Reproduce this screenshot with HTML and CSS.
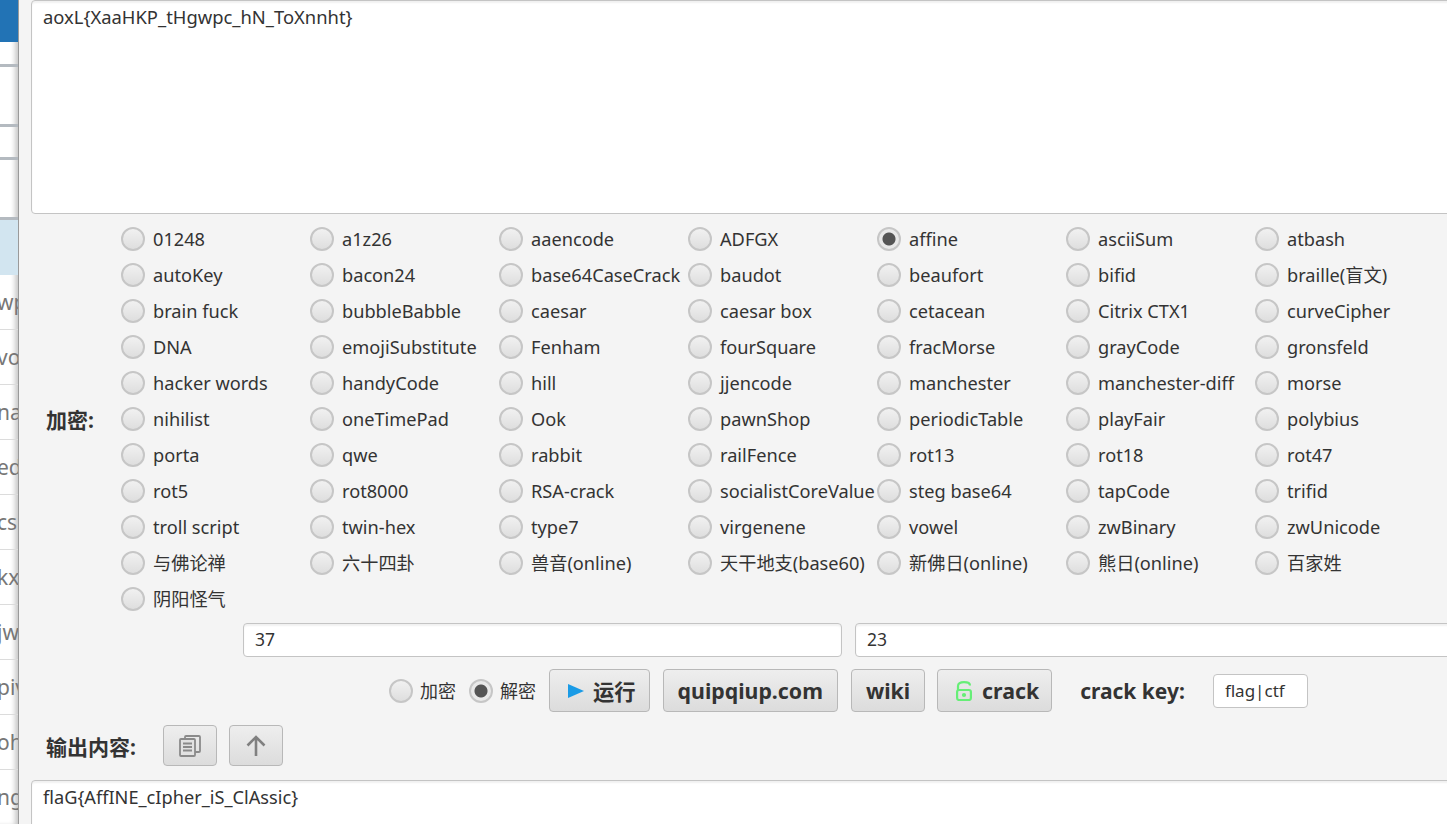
FILE: index.html
```html
<!DOCTYPE html>
<html lang="en">

<head>
    <meta charset="UTF-8">
    <title>CTF tools</title>
    <link rel="stylesheet" href="styles.css">
</head>

<body>
    <div class="back-window">
        <div class="back-head"></div>
        <div class="back-row thick row-a"></div>
        <div class="back-row thick row-b"></div>
        <div class="back-row thick row-c"></div>
        <div class="back-row thick row-b"></div>
        <div class="back-row selected"></div>
        <div class="back-row">wp</div>
        <div class="back-row">vo</div>
        <div class="back-row">na</div>
        <div class="back-row">edi</div>
        <div class="back-row">cs</div>
        <div class="back-row">kx</div>
        <div class="back-row">jw</div>
        <div class="back-row">piv</div>
        <div class="back-row">ohu</div>
        <div class="back-row">ng</div>
    </div>

    <div class="main">
        <textarea class="text-box input-text" spellcheck="false">aoxL{XaaHKP_tHgwpc_hN_ToXnnht}</textarea>

        <div class="cipher-row">
            <div class="bold-label cipher-label">加密:</div>
            <div class="cipher-grid">
                <label class="opt"><span class="radio"></span>01248</label>
                <label class="opt"><span class="radio"></span>a1z26</label>
                <label class="opt"><span class="radio"></span>aaencode</label>
                <label class="opt"><span class="radio"></span>ADFGX</label>
                <label class="opt"><span class="radio on"></span>affine</label>
                <label class="opt"><span class="radio"></span>asciiSum</label>
                <label class="opt"><span class="radio"></span>atbash</label>

                <label class="opt"><span class="radio"></span>autoKey</label>
                <label class="opt"><span class="radio"></span>bacon24</label>
                <label class="opt"><span class="radio"></span>base64CaseCrack</label>
                <label class="opt"><span class="radio"></span>baudot</label>
                <label class="opt"><span class="radio"></span>beaufort</label>
                <label class="opt"><span class="radio"></span>bifid</label>
                <label class="opt"><span class="radio"></span>braille(盲文)</label>

                <label class="opt"><span class="radio"></span>brain fuck</label>
                <label class="opt"><span class="radio"></span>bubbleBabble</label>
                <label class="opt"><span class="radio"></span>caesar</label>
                <label class="opt"><span class="radio"></span>caesar box</label>
                <label class="opt"><span class="radio"></span>cetacean</label>
                <label class="opt"><span class="radio"></span>Citrix CTX1</label>
                <label class="opt"><span class="radio"></span>curveCipher</label>

                <label class="opt"><span class="radio"></span>DNA</label>
                <label class="opt"><span class="radio"></span>emojiSubstitute</label>
                <label class="opt"><span class="radio"></span>Fenham</label>
                <label class="opt"><span class="radio"></span>fourSquare</label>
                <label class="opt"><span class="radio"></span>fracMorse</label>
                <label class="opt"><span class="radio"></span>grayCode</label>
                <label class="opt"><span class="radio"></span>gronsfeld</label>

                <label class="opt"><span class="radio"></span>hacker words</label>
                <label class="opt"><span class="radio"></span>handyCode</label>
                <label class="opt"><span class="radio"></span>hill</label>
                <label class="opt"><span class="radio"></span>jjencode</label>
                <label class="opt"><span class="radio"></span>manchester</label>
                <label class="opt"><span class="radio"></span>manchester-diff</label>
                <label class="opt"><span class="radio"></span>morse</label>

                <label class="opt"><span class="radio"></span>nihilist</label>
                <label class="opt"><span class="radio"></span>oneTimePad</label>
                <label class="opt"><span class="radio"></span>Ook</label>
                <label class="opt"><span class="radio"></span>pawnShop</label>
                <label class="opt"><span class="radio"></span>periodicTable</label>
                <label class="opt"><span class="radio"></span>playFair</label>
                <label class="opt"><span class="radio"></span>polybius</label>

                <label class="opt"><span class="radio"></span>porta</label>
                <label class="opt"><span class="radio"></span>qwe</label>
                <label class="opt"><span class="radio"></span>rabbit</label>
                <label class="opt"><span class="radio"></span>railFence</label>
                <label class="opt"><span class="radio"></span>rot13</label>
                <label class="opt"><span class="radio"></span>rot18</label>
                <label class="opt"><span class="radio"></span>rot47</label>

                <label class="opt"><span class="radio"></span>rot5</label>
                <label class="opt"><span class="radio"></span>rot8000</label>
                <label class="opt"><span class="radio"></span>RSA-crack</label>
                <label class="opt"><span class="radio"></span>socialistCoreValue</label>
                <label class="opt"><span class="radio"></span>steg base64</label>
                <label class="opt"><span class="radio"></span>tapCode</label>
                <label class="opt"><span class="radio"></span>trifid</label>

                <label class="opt"><span class="radio"></span>troll script</label>
                <label class="opt"><span class="radio"></span>twin-hex</label>
                <label class="opt"><span class="radio"></span>type7</label>
                <label class="opt"><span class="radio"></span>virgenene</label>
                <label class="opt"><span class="radio"></span>vowel</label>
                <label class="opt"><span class="radio"></span>zwBinary</label>
                <label class="opt"><span class="radio"></span>zwUnicode</label>

                <label class="opt"><span class="radio"></span>与佛论禅</label>
                <label class="opt"><span class="radio"></span>六十四卦</label>
                <label class="opt"><span class="radio"></span>兽音(online)</label>
                <label class="opt"><span class="radio"></span>天干地支(base60)</label>
                <label class="opt"><span class="radio"></span>新佛日(online)</label>
                <label class="opt"><span class="radio"></span>熊日(online)</label>
                <label class="opt"><span class="radio"></span>百家姓</label>

                <label class="opt"><span class="radio"></span>阴阳怪气</label>
            </div>
        </div>

        <div class="key-row">
            <input class="key-input" type="text" value="37">
            <input class="key-input" type="text" value="23">
        </div>

        <div class="action-row">
            <label class="opt small"><span class="radio"></span>加密</label>
            <label class="opt small"><span class="radio on"></span>解密</label>
            <button class="btn run-btn">
                <svg width="16" height="16" viewBox="0 0 16 16"><path d="M0 1L16 8L0 15Z" fill="#1a9be6"/></svg>
                运行
            </button>
            <button class="btn">quipqiup.com</button>
            <button class="btn">wiki</button>
            <button class="btn crack-btn">
                <svg width="16" height="20" viewBox="0 0 16 20" fill="none" stroke="#66ee77" stroke-width="2.2">
                    <path d="M2 9V5C2 2.500 4 1.200 8 1.200S14 2.500 14 4.500"/>
                    <rect x="1.100" y="9" width="13.800" height="10" rx="2"/>
                    <circle cx="8" cy="14" r="1"/>
                </svg>
                crack
            </button>
            <span class="bold-label crack-label">crack key:</span>
            <input class="crack-input" type="text" value="flag|ctf">
        </div>

        <div class="output-row">
            <div class="bold-label output-label">输出内容:</div>
            <button class="icon-btn">
                <svg width="22" height="22" viewBox="0 0 22 22" fill="none" stroke="#8a8a8a" stroke-width="1.800">
                    <rect x="6" y="1" width="15" height="16" rx="1"/>
                    <rect x="1" y="4" width="15" height="17" rx="1" fill="#e2e2e2"/>
                    <path d="M4 8.500H13M4 12H13M4 15.500H13"/>
                </svg>
            </button>
            <button class="icon-btn">
                <svg width="20" height="21" viewBox="0 0 20 21" fill="none" stroke="#808080" stroke-width="2.600">
                    <path d="M10 21V2M1.500 10.500L10 2L18.500 10.500"/>
                </svg>
            </button>
        </div>

        <textarea class="text-box output-text" spellcheck="false">flaG{AffINE_cIpher_iS_ClAssic}</textarea>
    </div>
</body>

</html>
```

FILE: styles.css
```css
html, body {
    height: 100%;
}

body {
    margin: 0;
    display: flex;
    overflow: hidden;
    font-family: "Noto Sans", "Noto Sans CJK SC", sans-serif;
    font-size: 18.2px;
    color: #333;
    background-color: #f4f4f4;
}

/* window behind, only a strip shows */
.back-window {
    width: 19px;
    flex-shrink: 0;
    overflow: hidden;
    background-color: #fff;
    box-shadow: inset -5px 0 5px -2px rgba(0, 0, 0, 0.22);
    border-right: 1px solid #9a9a9a;
    box-sizing: border-box;
}

.back-head {
    height: 42px;
    background-color: #2273b5;
}

.back-row {
    height: 55px;
    box-sizing: border-box;
    border-bottom: 1px solid #dcdcdc;
    font-size: 21px;
    line-height: 54px;
    text-indent: -3px;
    color: #777;
    white-space: nowrap;
    overflow: hidden;
}

.back-row.thick {
    border-bottom: 3px solid #b4bac0;
}

.row-a {
    height: 25px;
}

.row-b {
    height: 60px;
}

.row-c {
    height: 33px;
}

.back-row.selected {
    background-color: #d2e5f0;
    border-bottom: none;
}

.main {
    flex: 1;
    min-width: 0;
    overflow: hidden;
    display: flex;
    flex-direction: column;
    align-items: flex-start;
}

.text-box {
    display: block;
    width: 1440px;
    margin: 0 0 0 12px;
    padding: 5px 11px;
    box-sizing: border-box;
    border: 1px solid #c4c4c4;
    border-radius: 4px;
    background-color: #fff;
    box-shadow: inset 0 2px 2px rgba(0, 0, 0, 0.06);
    font-family: inherit;
    font-size: 18.2px;
    line-height: 22px;
    color: #333;
    resize: none;
    outline: none;
}

.input-text {
    height: 214px;
    flex-shrink: 0;
    font-size: 18.4px;
}

.output-text {
    height: 60px;
    flex-shrink: 0;
    margin-top: 14px;
}

.bold-label {
    font-size: 21px;
    font-weight: bold;
    white-space: nowrap;
}

.cipher-row {
    display: flex;
    align-items: center;
    margin-top: 7px;
    padding-left: 27px;
}

.cipher-label {
    width: 75px;
    flex-shrink: 0;
}

.cipher-grid {
    display: grid;
    grid-template-columns: repeat(7, 189px);
    grid-auto-rows: 36px;
}

.opt {
    display: flex;
    align-items: center;
    gap: 8px;
    line-height: 24px;
    white-space: nowrap;
}

.radio {
    width: 24px;
    height: 24px;
    flex-shrink: 0;
    box-sizing: border-box;
    border: 2px solid #c6c6c6;
    border-radius: 50%;
    background: linear-gradient(#f1f1f1, #dedede);
}

.radio.on {
    background: radial-gradient(circle, #555 0, #555 6px, #e9e9e9 7px);
}

.key-row {
    display: flex;
    gap: 13px;
    margin-top: 6px;
    padding-left: 224px;
}

.key-input {
    width: 599px;
    height: 34px;
    flex-shrink: 0;
    box-sizing: border-box;
    padding: 0 11px 2px;
    border: 1px solid #c4c4c4;
    border-radius: 4px;
    background-color: #fff;
    box-shadow: inset 0 2px 2px rgba(0, 0, 0, 0.06);
    font-family: inherit;
    font-size: 17.500px;
    color: #333;
    outline: none;
}

.action-row {
    display: flex;
    align-items: center;
    margin-top: 12px;
    padding-left: 370px;
    gap: 13px;
}

.opt.small {
    font-size: 18px;
    gap: 7px;
}

.btn {
    display: flex;
    align-items: center;
    gap: 9px;
    height: 43px;
    padding: 0 14px;
    box-sizing: border-box;
    border: 1px solid #b8b8b8;
    border-radius: 4px;
    background: linear-gradient(#eeeeee, #dcdcdc);
    font-family: inherit;
    font-size: 21.3px;
    font-weight: bold;
    color: #333;
    white-space: nowrap;
}

.run-btn {
    padding: 0 13px 0 18px;
}

.crack-btn {
    gap: 10px;
    margin-left: -1px;
    padding: 0 12px 0 18px;
}

.crack-label {
    margin-left: 15px;
}

.crack-input {
    width: 95px;
    height: 34px;
    margin-left: 15px;
    box-sizing: border-box;
    padding: 0 11px;
    border: 1px solid #c4c4c4;
    border-radius: 4px;
    background-color: #fff;
    font-family: inherit;
    font-size: 17px;
    color: #333;
    outline: none;
}

.output-row {
    display: flex;
    align-items: center;
    gap: 12px;
    margin-top: 13px;
    padding-left: 27px;
}

.output-label {
    width: 105px;
}

.icon-btn {
    display: flex;
    align-items: center;
    justify-content: center;
    width: 54px;
    height: 41px;
    padding: 0;
    box-sizing: border-box;
    border: 1px solid #b8b8b8;
    border-radius: 4px;
    background: linear-gradient(#eeeeee, #dcdcdc);
}
```
